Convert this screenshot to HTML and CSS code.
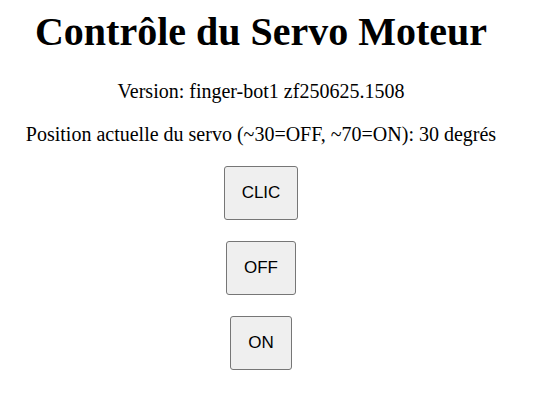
FILE: index.html
```html
<!DOCTYPE html>
<html lang="fr">
<head>
<meta charset="utf-8">
<title>Contrôle du Servo Moteur</title>
<link rel="stylesheet" href="styles.css">
</head>
<body>
<main class="page">
  <h1 class="title">Contrôle du Servo Moteur</h1>
  <p class="info">Version: finger-bot1 zf250625.1508</p>
  <p class="info">Position actuelle du servo (~30=OFF, ~70=ON): 30 degrés</p>
  <div class="controls">
    <button class="btn" type="button">CLIC</button>
    <button class="btn" type="button">OFF</button>
    <button class="btn" type="button">ON</button>
  </div>
</main>
</body>
</html>
```

FILE: styles.css
```css
html, body {
  background: #ffffff;
}
body {
  margin: 8px;
  font-family: "Liberation Serif", "Times New Roman", serif;
  color: #000000;
}
.page {
  width: 506px;
  text-align: center;
}
.title {
  margin: 0;
  font-size: 40px;
  font-weight: bold;
}
.info {
  margin: 20px 0;
  font-size: 20px;
}
.info:first-of-type {
  margin-top: 25px;
}
.controls {
  display: flex;
  flex-direction: column;
  align-items: center;
  gap: 21px;
  margin-top: 20px;
}
.btn {
  font-family: "Liberation Sans", Arial, sans-serif;
  font-size: 17px;
  color: #000000;
  background: #efefef;
  border: 1px solid #767676;
  border-radius: 3px;
  padding: 16px 17px;
}
```
